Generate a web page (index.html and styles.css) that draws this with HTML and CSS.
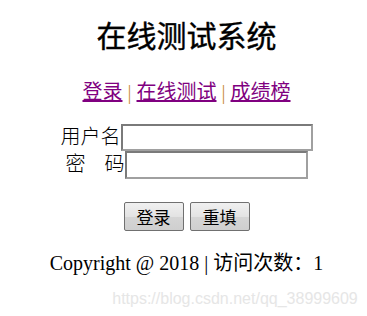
FILE: index.html
```html
<!DOCTYPE html>
<html lang="zh-CN">
<head>
    <meta charset="UTF-8">
    <title>在线测试系统</title>
    <link rel="stylesheet" href="styles.css">
</head>
<body>
    <h1 class="title">在线测试系统</h1>
    <div class="nav">
        <a href="#">登录</a> <span class="sep">|</span> <a href="#">在线测试</a> <span class="sep">|</span> <a href="#">成绩榜</a>
    </div>
    <form class="login">
        <div class="row">
            <label class="label">用户名</label><input type="text" class="field field-user">
        </div>
        <div class="row">
            <label class="label label-pwd">密<span class="gap"></span>码</label><input type="password" class="field field-pwd">
        </div>
        <div class="buttons">
            <button type="button" class="btn">登录</button>
            <button type="reset" class="btn">重填</button>
        </div>
    </form>
    <div class="footer">Copyright @ 2018 | 访问次数：1</div>
    <div class="watermark">https://blog.csdn.net/qq_38999609</div>
</body>
</html>
```

FILE: styles.css
```css
body {
    margin: 0;
    padding-left: 6px;
    background: #fff;
    color: #000;
    font-family: 'Liberation Serif', 'Noto Sans CJK SC', serif;
    text-align: center;
}

.title {
    font-size: 30px;
    font-weight: normal;
    margin: 0;
    padding-top: 19px;
    line-height: 36px;
    -webkit-text-stroke: 0.4px #000;
}

.nav {
    margin-top: 25px;
    font-size: 20px;
    line-height: 24px;
}

.nav a,
.nav a:visited {
    color: #800080;
    text-decoration: underline;
}

.sep {
    color: #c98f3e;
}

.login {
    margin-top: 20px;
}

.row {
    font-size: 20px;
    line-height: 27px;
    height: 27px;
}

.label {
    display: inline-block;
    vertical-align: top;
    font-weight: 300;
}

.label-pwd {
    width: 59px;
    text-align: left;
}

.gap {
    display: inline-block;
    width: 19px;
}

.field {
    box-sizing: border-box;
    height: 27px;
    margin: 0;
    padding: 0 2px;
    border: 2px solid #7a7a7a;
    border-right-color: #a0a0a0;
    border-bottom-color: #a0a0a0;
    background: #fff;
    vertical-align: top;
}

.field-user {
    width: 192px;
    height: 27px;
}

.field-pwd {
    width: 183px;
    height: 28px;
}

.buttons {
    margin-top: 24px;
    font-size: 0;
}

.btn {
    width: 60px;
    height: 29px;
    margin: 0 3px;
    padding: 0;
    font-family: 'Noto Sans CJK SC', sans-serif;
    font-size: 17px;
    color: #000;
    border: 1px solid #707070;
    border-radius: 2px;
    background: linear-gradient(#f0f0f0, #e3e3e3 50%, #d5d5d5 51%, #cfcfcf);
}

.footer {
    margin-top: 20px;
    font-size: 20px;
    line-height: 24px;
}

.watermark {
    margin-top: 15px;
    padding-left: 97px;
    font-family: 'Liberation Sans', sans-serif;
    font-size: 16px;
    color: #e6e6e6;
}
```
